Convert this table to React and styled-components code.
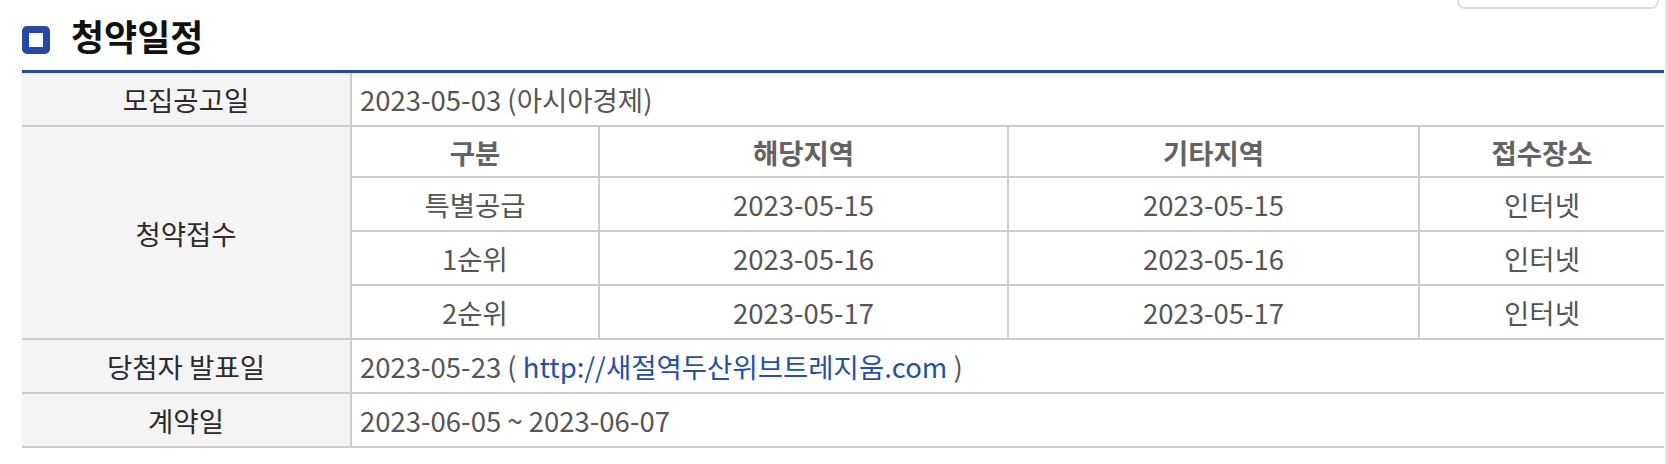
import styled, { createGlobalStyle } from "styled-components";

const GlobalStyle = createGlobalStyle`
    html, body {
        margin: 0;
        padding: 0;
        background: #ffffff;
    }
    body {
        font-family: "Noto Sans CJK KR", "Noto Sans", sans-serif;
    }
`;

const StyledPage = styled.div`
    width: 1668px;
    height: 464px;
    box-sizing: border-box;
    padding-left: 22px;
    padding-right: 1px;
    border-right: 3px solid #e6e6e6;
    overflow: hidden;
`;

const StyledTitleBar = styled.div`
    height: 70px;
    display: flex;
    align-items: center;
`;

const StyledIcon = styled.span`
    width: 28px;
    height: 28px;
    box-sizing: border-box;
    border: 7px solid #2449a8;
    border-radius: 5px;
    background: #ffffff;
    margin-top: 10px;
    flex-shrink: 0;
`;

const StyledTitle = styled.h2`
    margin: 0;
    margin-left: 21px;
    font-size: 36px;
    font-weight: 700;
    color: #111111;
    line-height: 1;
`;

const StyledTopBox = styled.div`
    margin-left: auto;
    margin-right: 5px;
    align-self: flex-start;
    margin-top: -30px;
    width: 202px;
    height: 39px;
    box-sizing: border-box;
    border: 2px solid #dddddd;
    border-radius: 8px;
`;

const StyledTable = styled.table`
    width: 100%;
    table-layout: fixed;
    border-collapse: separate;
    border-spacing: 0;
    border-top: 3px solid #2449a8;
    font-size: 27.5px;
    color: #555555;
`;

const StyledLabel = styled.th`
    width: 330px;
    height: 54px;
    box-sizing: border-box;
    padding: 0;
    background: #f4f4f4;
    border-right: 2px solid #cccccc;
    border-bottom: 2px solid #cccccc;
    font-weight: 400;
    color: #2b2b2b;
    text-align: center;
`;

const StyledValue = styled.td`
    height: 54px;
    box-sizing: border-box;
    padding: ${(p) => (p.$nested ? "0" : "0 0 0 8px")};
    border-bottom: 2px solid #cccccc;
    vertical-align: middle;
    text-align: left;
`;

const StyledInner = styled.table`
    width: 100%;
    table-layout: fixed;
    border-collapse: separate;
    border-spacing: 0;
`;

const StyledInnerHead = styled.th`
    height: 51px;
    box-sizing: border-box;
    padding: 0;
    font-weight: 700;
    color: #636363;
    text-align: center;
    border-bottom: 2px solid #cccccc;
    border-left: ${(p) => (p.$first ? "none" : "2px solid #cccccc")};
`;

const StyledInnerCell = styled.td`
    height: ${(p) => (p.$last ? "52px" : "54px")};
    box-sizing: border-box;
    padding: 0;
    text-align: center;
    border-bottom: ${(p) => (p.$last ? "none" : "2px solid #cccccc")};
    border-left: ${(p) => (p.$first ? "none" : "2px solid #cccccc")};
`;

const StyledLink = styled.a`
    color: #2350b0;
    text-decoration: none;
`;

const schedule = [
    { type: "특별공급", local: "2023-05-15", other: "2023-05-15", place: "인터넷" },
    { type: "1순위", local: "2023-05-16", other: "2023-05-16", place: "인터넷" },
    { type: "2순위", local: "2023-05-17", other: "2023-05-17", place: "인터넷" },
];

const heads = ["구분", "해당지역", "기타지역", "접수장소"];

const App = () => {
    return (
        <>
            <GlobalStyle />
            <StyledPage>
                <StyledTitleBar>
                    <StyledIcon />
                    <StyledTitle>청약일정</StyledTitle>
                    <StyledTopBox />
                </StyledTitleBar>
                <StyledTable>
                    <tbody>
                        <tr>
                            <StyledLabel>모집공고일</StyledLabel>
                            <StyledValue>2023-05-03 (아시아경제)</StyledValue>
                        </tr>
                        <tr>
                            <StyledLabel>청약접수</StyledLabel>
                            <StyledValue $nested>
                                <StyledInner>
                                    <colgroup>
                                        <col style={{ width: 246 }} />
                                        <col style={{ width: 409 }} />
                                        <col style={{ width: 411 }} />
                                        <col />
                                    </colgroup>
                                    <tbody>
                                        <tr>
                                            {heads.map((h, i) => (
                                                <StyledInnerHead key={h} $first={i === 0}>
                                                    {h}
                                                </StyledInnerHead>
                                            ))}
                                        </tr>
                                        {schedule.map((row, idx) => {
                                            const last = idx === schedule.length - 1;
                                            return (
                                                <tr key={row.type}>
                                                    <StyledInnerCell $first $last={last}>{row.type}</StyledInnerCell>
                                                    <StyledInnerCell $last={last}>{row.local}</StyledInnerCell>
                                                    <StyledInnerCell $last={last}>{row.other}</StyledInnerCell>
                                                    <StyledInnerCell $last={last}>{row.place}</StyledInnerCell>
                                                </tr>
                                            );
                                        })}
                                    </tbody>
                                </StyledInner>
                            </StyledValue>
                        </tr>
                        <tr>
                            <StyledLabel>당첨자 발표일</StyledLabel>
                            <StyledValue>
                                2023-05-23 ( <StyledLink href="#">http://새절역두산위브트레지움.com</StyledLink> )
                            </StyledValue>
                        </tr>
                        <tr>
                            <StyledLabel>계약일</StyledLabel>
                            <StyledValue>2023-06-05 ~ 2023-06-07</StyledValue>
                        </tr>
                    </tbody>
                </StyledTable>
            </StyledPage>
        </>
    );
};

export default App;
